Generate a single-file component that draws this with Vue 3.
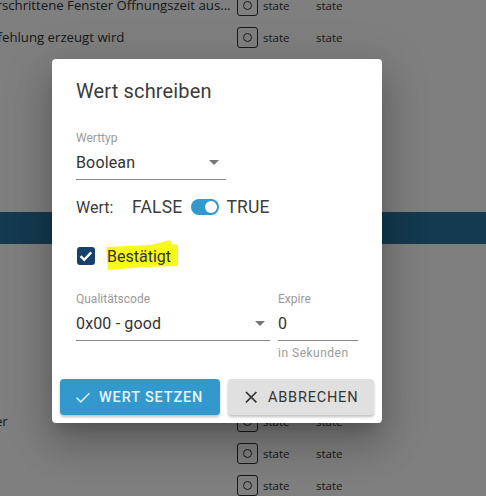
<script setup>
const topRows = [
  { text: 'überschrittene Fenster Öffnungszeit aus...', indent: -27 },
  { text: 'Empfehlung erzeugt wird', indent: -30 },
]
const bottomRows = [
  { text: 'Hauptschalter', indent: -79 },
  { text: '', indent: 0 },
  { text: '', indent: 0 },
]
</script>

<template>
  <div class="page">
    <div class="table">
      <div v-for="(row, i) in topRows" :key="i" class="row">
        <div class="name"><span :style="{ marginLeft: row.indent + 'px' }">{{ row.text }}</span></div>
        <div class="stateIcon"><i></i></div>
        <div class="state">state</div>
        <div class="state">state</div>
      </div>
      <div class="gap1"></div>
      <div class="band"></div>
      <div class="gap2"></div>
      <div v-for="(row, i) in bottomRows" :key="'b' + i" class="row">
        <div class="name"><span :style="{ marginLeft: row.indent + 'px' }">{{ row.text }}</span></div>
        <div class="stateIcon"><i></i></div>
        <div class="state">state</div>
        <div class="state">state</div>
      </div>
    </div>

    <div class="overlay"></div>

    <div class="dialog">
      <h2>Wert schreiben</h2>

      <div class="field typeField">
        <label>Werttyp</label>
        <div class="select">
          <span>Boolean</span>
          <b class="arrow"></b>
        </div>
      </div>

      <div class="valueRow">
        <span class="valueLabel">Wert:</span>
        <span class="valueOption">FALSE</span>
        <span class="switch"><i></i></span>
        <span class="valueOption">TRUE</span>
      </div>

      <div class="confirmRow">
        <span class="checkbox">
          <svg width="18" height="18" viewBox="0 0 18 18">
            <path d="M3.6 9.2l3.6 3.6 7-7.4" fill="none" stroke="#fff" stroke-width="2.4" />
          </svg>
        </span>
        <span class="confirmText">
          <svg class="marker" width="74" height="32" viewBox="0 0 74 32">
            <path d="M0 7 L45 5 L64 0 L66 4 L72 5 L72 26 L40 27 L2 30 Z" fill="#f8f81e" />
          </svg>
          <span class="confirmLabel">Bestätigt</span>
        </span>
      </div>

      <div class="qualityRow">
        <div class="field qualityField">
          <label>Qualitätscode</label>
          <div class="select">
            <span>0x00 - good</span>
            <b class="arrow"></b>
          </div>
        </div>
        <div class="field expireField">
          <label>Expire</label>
          <div class="select"><span>0</span></div>
          <small>in Sekunden</small>
        </div>
      </div>

      <div class="actions">
        <button class="btn primary">
          <svg width="18" height="18" viewBox="0 0 24 24">
            <path d="M3.5 13l5.5 5.5L20.5 7" fill="none" stroke="#d8eefa" stroke-width="2" />
          </svg>
          Wert setzen
        </button>
        <button class="btn secondary">
          <svg width="20" height="20" viewBox="0 0 24 24">
            <path d="M6 6l12.5 12.5M18.5 6L6 18.5" fill="none" stroke="#333" stroke-width="2" />
          </svg>
          Abbrechen
        </button>
      </div>
    </div>
  </div>
</template>

<style>
html, body {
  margin: 0;
  padding: 0;
}
</style>

<style scoped>
.page {
  position: relative;
  width: 486px;
  height: 496px;
  overflow: hidden;
  background: #fff;
  font-family: Roboto, "Liberation Sans", sans-serif;
  color: #333;
}

.table {
  margin-top: -11px;
  font-family: "Open Sans", "Liberation Sans", sans-serif;
  font-size: 13.2px;
  color: #333;
}

.row {
  display: flex;
  align-items: center;
  height: 32px;
}

.name {
  width: 237px;
  flex: none;
  overflow: hidden;
  white-space: nowrap;
}

.stateIcon {
  width: 21px;
  height: 21px;
  flex: none;
  box-sizing: border-box;
  border: 1.5px solid #333;
  border-radius: 3px;
  display: flex;
  align-items: center;
  justify-content: center;
  margin-right: 5px;
}

.stateIcon i {
  width: 9px;
  height: 9px;
  box-sizing: border-box;
  border: 1.5px solid #333;
  border-radius: 50%;
}

.state {
  width: 53px;
  font-size: 11.5px;
}

.gap1 {
  height: 159px;
}

.band {
  height: 32px;
  background: #28749f;
}

.gap2 {
  height: 161px;
}

.overlay {
  position: absolute;
  inset: 0;
  background: rgba(0, 0, 0, 0.5);
}

.dialog {
  position: absolute;
  left: 52px;
  top: 59px;
  width: 330px;
  height: 364px;
  box-sizing: border-box;
  padding: 20px 24px 0;
  background: #fff;
  border-radius: 4px;
  box-shadow: 0 11px 15px -7px rgba(0, 0, 0, 0.2), 0 24px 38px 3px rgba(0, 0, 0, 0.14), 0 9px 46px 8px rgba(0, 0, 0, 0.12);
}

h2 {
  margin: 0;
  font-size: 20px;
  font-weight: 400;
  line-height: 24px;
  letter-spacing: 0.15px;
  color: #3c3c3c;
}

.field label {
  display: block;
  font-size: 12px;
  line-height: 14px;
  color: #9a9a9a;
}

.select {
  display: flex;
  align-items: center;
  justify-content: space-between;
  height: 35px;
  padding-top: 1px;
  box-sizing: border-box;
  border-bottom: 1px solid #8a8a8a;
  font-size: 16px;
  letter-spacing: 0.15px;
  color: #333;
}

.arrow {
  width: 0;
  height: 0;
  border-left: 5px solid transparent;
  border-right: 5px solid transparent;
  border-top: 5px solid #757575;
  margin-right: 7px;
}

.typeField {
  width: 150px;
  margin-top: 28px;
}

.valueRow {
  display: flex;
  align-items: center;
  height: 24px;
  margin-top: 15px;
  font-size: 16px;
  color: #3c3c3c;
}

.valueLabel {
  width: 56px;
}

.valueOption {
  font-size: 17.5px;
  letter-spacing: 0.2px;
}

.switch {
  position: relative;
  width: 28px;
  height: 16px;
  margin: 0 7px 0 9px;
  border-radius: 8px;
  background: #3399cc;
}

.switch i {
  position: absolute;
  right: 2px;
  top: 2px;
  width: 12px;
  height: 12px;
  border-radius: 50%;
  background: #fff;
}

.confirmRow {
  display: flex;
  align-items: center;
  height: 30px;
  margin-top: 22px;
}

.checkbox {
  width: 18px;
  height: 18px;
  margin-left: 1px;
  border-radius: 3px;
  background: #17406d;
  flex: none;
}

.confirmText {
  position: relative;
  margin-left: 12px;
  font-size: 16px;
  color: #333;
}

.marker {
  position: absolute;
  left: -1px;
  top: -7px;
}

.confirmLabel {
  position: relative;
}

.qualityRow {
  display: flex;
  gap: 8px;
  margin-top: 21px;
}

.qualityField {
  width: 194px;
}

.qualityField .arrow {
  margin-right: 5px;
}

.expireField {
  width: 80px;
}

.field small {
  display: block;
  margin-top: 5px;
  font-size: 12px;
  line-height: 14px;
  letter-spacing: 0.5px;
  color: #9a9a9a;
}

.actions {
  display: flex;
  gap: 8px;
  margin: 19px 0 0 -16px;
}

.btn {
  display: flex;
  flex: none;
  align-items: center;
  height: 36px;
  padding: 0 0 0 14px;
  box-sizing: border-box;
  border: 0;
  border-radius: 4px;
  font-family: Roboto, "Liberation Sans", sans-serif;
  font-size: 14.5px;
  font-weight: 500;
  letter-spacing: 0.85px;
  text-transform: uppercase;
  box-shadow: 0 2px 3px rgba(0, 0, 0, 0.25);
}

.primary {
  width: 160px;
  gap: 7px;
  background: #3399cc;
  color: #e4f3fb;
}

.secondary {
  width: 146px;
  padding-left: 13px;
  gap: 7px;
  background: #e0e0e0;
  color: #333;
  font-weight: 400;
  letter-spacing: 0.8px;
}
</style>
